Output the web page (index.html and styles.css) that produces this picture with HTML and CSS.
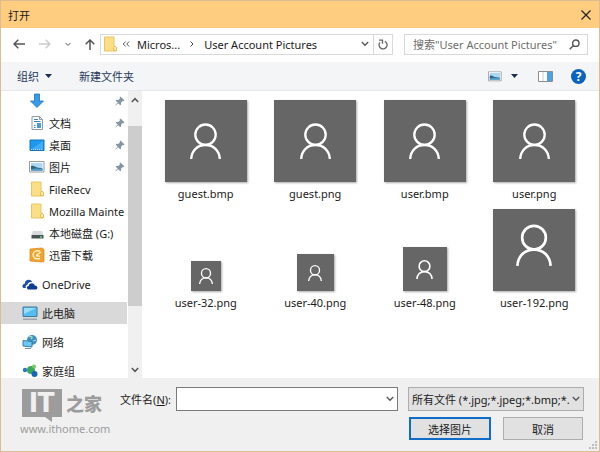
FILE: index.html
```html
<!DOCTYPE html>
<html lang="zh-CN">
<head>
    <meta charset="UTF-8">
    <title>打开</title>
    <link rel="stylesheet" href="styles.css">
</head>
<body>
<!-- 公用图标 -->
<svg class="sprite" aria-hidden="true">
    <symbol id="person" viewBox="0 0 31 36">
        <circle cx="15.5" cy="11.7" r="10.2"/>
        <path d="M1.2 36C1.6 27.500 7.500 22 15.500 22S29.400 27.500 29.800 36"/>
    </symbol>
    <symbol id="folder" viewBox="0 0 16 16">
        <path d="M2.500 1h9.500v9.500l2 .5v4h-11.500z" fill="#fbdf86" stroke="#e8c562"/>
        <path d="M11.500 14.500v-3l1.500-1.500 1.500 1.500v3z" fill="#fce9a8" stroke="#e3bd55"/>
    </symbol>
    <symbol id="pin" viewBox="0 0 10 10">
        <path d="M5.500.5l4 4-1 .8-.8-.3-1.700 1.700.1 1.800-.9.8-2-2L.6 9.600l-.4-.3 2.500-2.700-2-1.900.8-.9 1.900.1L5 2.200l-.4-.8z" fill="#8695a3"/>
    </symbol>
    <symbol id="chevron" viewBox="0 0 8 6">
        <path d="M.8 1l3.200 3.300L7.200 1" fill="none" stroke="#555" stroke-width="1.300"/>
    </symbol>
    <symbol id="picture" viewBox="0 0 16 12">
        <path d="M.5.5h14.500v10.500H.5z" fill="#fff" stroke="#9a9a9a"/>
        <path d="M2 2h11.500v7.500H2z" fill="#a9d8f5"/>
        <path d="M2 5c3-1 4 1 6 1.500s4 .5 5.500 1V9.500H2z" fill="#32647d"/>
        <path d="M2 8.500c4-1.500 7-1 11.500-.5v1.500H2z" fill="#4c9fd0"/>
    </symbol>
</svg>

<div class="dialog">
    <header class="titlebar">
        <span>打开</span>
        <button class="close" aria-label="关闭">
            <svg width="10" height="10" viewBox="0 0 10 10"><path d="M.5.5l9 9M9.500.5l-9 9" stroke="#222" stroke-width="1.200"/></svg>
        </button>
    </header>

    <nav class="navbar">
        <div class="history">
            <button class="plain" aria-label="后退"><svg width="12" height="10" viewBox="0 0 12 10"><path d="M12 5H1M5.300.7L1 5l4.300 4.300"/></svg></button>
            <button class="plain off" aria-label="前进"><svg width="12" height="10" viewBox="0 0 12 10"><path d="M0 5h11M6.700.7L11 5 6.700 9.300"/></svg></button>
            <button class="plain small" aria-label="最近"><svg width="6" height="5" viewBox="0 0 8 6"><use href="#chevron"/></svg></button>
            <button class="plain" aria-label="向上"><svg width="10" height="11" viewBox="0 0 10 11"><path d="M5 11V1M.7 5.300L5 1l4.300 4.300"/></svg></button>
        </div>
        <div class="address">
            <svg class="folder" width="16" height="16"><use href="#folder"/></svg>
            <svg width="8" height="6" viewBox="0 0 8 6"><path d="M3.700.5L1.200 3l2.500 2.500M7.200.5L4.700 3l2.500 2.500" fill="none" stroke="#555"/></svg>
            <a class="crumb" href="#">Micros...</a>
            <svg width="4" height="6" viewBox="0 0 4 6"><path d="M.5.5L3 3 .5 5.500" fill="none" stroke="#444"/></svg>
            <a class="crumb last" href="#">User Account Pictures</a>
            <button class="drop" aria-label="历史记录"><svg width="8" height="6"><use href="#chevron"/></svg></button>
            <button class="refresh" aria-label="刷新">
                <svg width="10" height="11" viewBox="0 0 10 11" fill="none" stroke="#666" stroke-width="1.300"><path d="M6.800 2.300A4 4 0 1 1 2 3.300M1 1.200h3.500v3.500"/></svg>
            </button>
        </div>
        <div class="search">
            <input type="text" aria-label="搜索" placeholder="搜索&quot;User Account Pictures&quot;">
            <svg width="11" height="11" viewBox="0 0 11 11" fill="none" stroke="#555" stroke-width="1.400"><circle cx="6.800" cy="4.200" r="3.200"/><path d="M4.500 6.500L.7 10.300"/></svg>
        </div>
    </nav>

    <div class="toolbar">
        <button class="tool">组织<svg width="7" height="4" viewBox="0 0 7 4"><path d="M0 0h7L3.500 4z" fill="#1b2f55"/></svg></button>
        <button class="tool">新建文件夹</button>
        <div class="views">
            <button class="plain" aria-label="视图"><svg width="14" height="11" viewBox="0 0 16 12"><use href="#picture"/></svg></button>
            <button class="plain" aria-label="更多视图"><svg width="7" height="4" viewBox="0 0 7 4"><path class="solid" d="M0 0h7L3.500 4z"/></svg></button>
            <button class="plain pane" aria-label="预览窗格">
                <svg width="15" height="11" viewBox="0 0 15 11"><path class="frame" d="M.5.5h14v10H.5z"/><path class="divider" d="M5 1v9"/><path class="preview" d="M9 1h5v9H9z"/></svg>
            </button>
            <button class="help" aria-label="帮助">?</button>
        </div>
    </div>

    <main class="content">
        <aside class="sidebar">
            <ul class="tree">
                <li class="sub">
                    <svg width="16" height="16" viewBox="0 0 16 16"><path d="M5.500 1h5v7h4L8 14.500 1.500 8h4z" fill="#359be8" stroke="#2173b8" stroke-width=".8"/></svg>
                    <span></span><svg class="pin" width="10" height="10"><use href="#pin"/></svg>
                </li>
                <li class="sub">
                    <svg width="16" height="16" viewBox="0 0 16 16"><path d="M3 1.500h7.500l3 3v10H3z" fill="#fff" stroke="#8b9ba8"/><path d="M5 4.500h4M5 6.500h6.500M5 10.500h1.500M5 12.500h1.500" stroke="#3387c5"/><path d="M8 8h4v5H8z" fill="#4b9cd3"/><path d="M10.500 1.500v3h3" fill="none" stroke="#8b9ba8"/></svg>
                    <span>文档</span><svg class="pin" width="10" height="10"><use href="#pin"/></svg>
                </li>
                <li class="sub">
                    <svg width="16" height="16" viewBox="0 0 16 16"><path d="M1 3h14v10.500H1z" fill="#1c98ef" stroke="#1373b9"/><path d="M2 12.500L14 4v8.500z" fill="#42adf6"/><path d="M2 12.500h12" stroke="#bce3ff" stroke-dasharray="1 1"/></svg>
                    <span>桌面</span><svg class="pin" width="10" height="10"><use href="#pin"/></svg>
                </li>
                <li class="sub">
                    <svg width="16" height="12"><use href="#picture"/></svg>
                    <span>图片</span><svg class="pin" width="10" height="10"><use href="#pin"/></svg>
                </li>
                <li class="sub"><svg width="16" height="16"><use href="#folder"/></svg><span>FileRecv</span></li>
                <li class="sub"><svg width="16" height="16"><use href="#folder"/></svg><span>Mozilla Mainte</span></li>
                <li class="sub">
                    <svg width="16" height="16" viewBox="0 0 16 16"><path d="M4 6h9l1.500 4h-12z" fill="#d8dbdc"/><path d="M2.500 10h12v3.500h-12z" fill="#4c5357"/><path d="M11 12h2" stroke="#59e36a" stroke-width="1.300"/></svg>
                    <span>本地磁盘 (G:)</span>
                </li>
                <li class="sub">
                    <svg width="16" height="16" viewBox="0 0 16 16"><path d="M1 2l12-1 2 1.500v12L13 15 1 14z" fill="#f2a32c" stroke="#d98413" stroke-width=".7"/><path d="M11 4C7 3 4 5 4 8s3 4.500 7 3.500M7 8.500l5-3.500M7 8.500l4 1" fill="none" stroke="#fff3cf" stroke-width="1.400"/></svg>
                    <span>迅雷下载</span>
                </li>
                <li class="root">
                    <svg width="16" height="16" viewBox="0 0 16 16"><path d="M1.500 12C-.5 11 .5 7.800 2.800 7.800 2.600 3.500 8.500 2 10.200 6 7 5.500 5.500 7.500 5.300 9 3.500 9 3.300 11 4 12z" fill="#1b4fa8"/><path d="M6.500 13.500c-2.300-.5-2-3.500.2-3.500.2-3.500 5.500-3.500 6-.5 3.500 0 3.300 4 .8 4z" fill="#0d3c92"/></svg>
                    <span>OneDrive</span>
                </li>
                <li class="root current">
                    <svg width="16" height="16" viewBox="0 0 16 16"><path d="M1 2h14v9.500H1z" fill="#55bdf0" stroke="#41799d"/><path d="M2 3h12L2 9z" fill="#97ddfa"/><path d="M1 14.200h14" stroke="#8b9aa3" stroke-width="1.200"/></svg>
                    <span>此电脑</span>
                </li>
                <li class="root">
                    <svg width="16" height="16" viewBox="0 0 16 16"><circle cx="10" cy="6" r="5" fill="#3b8fc4"/><path d="M7 3c3-2 4 1 2 2M11 7l3-1" stroke="#a8dfbc" stroke-width="1.300" fill="none"/><path d="M1 6.500l9 1v5.500l-9-1z" fill="#69c8f4" stroke="#3b7fa9"/><path d="M3 14.500h6" stroke="#77909d"/></svg>
                    <span>网络</span>
                </li>
                <li class="root">
                    <svg width="16" height="16" viewBox="0 0 16 16"><circle cx="3" cy="7" r="2.200" fill="#2b78c5"/><circle cx="9" cy="7" r="4" fill="#3ba75b"/><circle cx="12" cy="3.500" r="2" fill="#76ca62"/><circle cx="12.500" cy="11" r="3" fill="#1665b8"/></svg>
                    <span>家庭组</span>
                </li>
            </ul>
            <div class="scrollbar">
                <button class="plain" aria-label="向上滚动"><svg width="8" height="6" viewBox="0 0 8 6"><path d="M.8 5L4 1.700 7.200 5"/></svg></button>
                <div class="thumb"></div>
                <button class="plain" aria-label="向下滚动"><svg width="8" height="6" viewBox="0 0 8 6"><path d="M.8 1L4 4.300 7.200 1"/></svg></button>
            </div>
        </aside>

        <div class="files">
            <figure><div class="thumbnail"><svg><use href="#person"/></svg></div><figcaption>guest.bmp</figcaption></figure>
            <figure><div class="thumbnail"><svg><use href="#person"/></svg></div><figcaption>guest.png</figcaption></figure>
            <figure><div class="thumbnail"><svg><use href="#person"/></svg></div><figcaption>user.bmp</figcaption></figure>
            <figure><div class="thumbnail"><svg><use href="#person"/></svg></div><figcaption>user.png</figcaption></figure>
            <figure><div class="thumbnail s32"><svg><use href="#person"/></svg></div><figcaption>user-32.png</figcaption></figure>
            <figure><div class="thumbnail s40"><svg><use href="#person"/></svg></div><figcaption>user-40.png</figcaption></figure>
            <figure><div class="thumbnail s48"><svg><use href="#person"/></svg></div><figcaption>user-48.png</figcaption></figure>
            <figure><div class="thumbnail s192"><svg><use href="#person"/></svg></div><figcaption>user-192.png</figcaption></figure>
        </div>
    </main>

    <footer class="bottom">
        <div class="brand">
            <div class="logo"><span class="it">IT</span><span class="home">之家</span></div>
            <div class="site">www.ithome.com</div>
        </div>
        <div class="form">
            <div class="line">
                <label for="filename">文件名(<u>N</u>):</label>
                <div class="combo">
                    <input type="text" id="filename">
                    <svg width="8" height="6"><use href="#chevron"/></svg>
                </div>
                <div class="filter">
                    <select aria-label="文件类型"><option>所有文件 (*.jpg;*.jpeg;*.bmp;*.</option></select>
                    <svg width="8" height="6"><use href="#chevron"/></svg>
                </div>
            </div>
            <div class="actions">
                <button class="btn primary">选择图片</button>
                <button class="btn">取消</button>
            </div>
        </div>
        <svg class="grip" width="9" height="9" viewBox="0 0 9 9"><path d="M6 0h2v2H6zM3 3h2v2H3zM6 3h2v2H6zM0 6h2v2H0zM3 6h2v2H3zM6 6h2v2H6z" fill="#bdbdbd"/></svg>
    </footer>
</div>
</body>
</html>
```
FILE: styles.css
```css
*{box-sizing:border-box;}
body,ul,figure{margin:0;padding:0;}
body,button,input,select{
    font-family:"Noto Sans","Noto Sans CJK SC",sans-serif;
    font-size:11px;
    color:#1a1a1a;
}
button,input,select{margin:0;padding:0;border:0;background:none;}
svg{flex:none;}
.sprite{position:absolute;width:0;height:0;}
.dialog{
    display:flex;
    flex-direction:column;
    min-height:100vh;
    border:1px solid #dcbc90;
    background:#fff;
}
.titlebar{
    display:flex;
    align-items:center;
    justify-content:space-between;
    height:27px;
    padding:0 8px 0 7px;
    background:#ffcd80;
}
.close{display:flex;}
.plain{
    display:flex;
    align-items:center;
    justify-content:center;
}
.plain path{fill:none;stroke:#555;stroke-width:1.5;}
.plain .solid{fill:#1b2f55;stroke:none;}
.plain .frame{fill:#fff;stroke:#8c8c8c;stroke-width:1;}
.plain .divider{stroke:#ccc;stroke-width:1;}
.plain .preview{fill:#4ba3e3;stroke:none;}
.off path{stroke:#ccc;}

/* 地址栏 */
.navbar{
    display:flex;
    align-items:center;
    height:34px;
    padding:0 11px 2px 12px;
}
.history{
    display:flex;
    align-items:center;
    gap:14px;
    width:87px;
}
.history .small{width:6px;}
.address{
    display:flex;
    flex:1;
    align-items:center;
    height:21px;
    border:1px solid #d9d9d9;
}
.folder{margin:0 4px 0 1px;}
.crumb{
    margin:0 10px 0 7px;
    color:#1a1a1a;
    text-decoration:none;
    white-space:nowrap;
}
.last{
    flex:1;
    margin:0 0 0 10px;
}
.drop{
    display:flex;
    padding:0 4px;
}
.refresh{
    display:flex;
    align-items:center;
    justify-content:center;
    width:19px;
    height:100%;
    border-left:1px solid #d9d9d9;
}
.search{
    display:flex;
    align-items:center;
    width:184px;
    height:21px;
    margin-left:11px;
    padding:0 7px 0 8px;
    border:1px solid #d9d9d9;
}
.search input{
    flex:1;
    min-width:0;
    outline:0;
}
.search input::placeholder{color:#6d6d6d;}

/* 工具栏 */
.toolbar{
    display:flex;
    align-items:center;
    gap:27px;
    height:29px;
    padding:0 13px 0 16px;
    border-bottom:1px solid #e6e8ea;
    background:#f4f5f7;
}
.tool{
    display:flex;
    align-items:center;
    gap:6px;
    color:#1e395b;
}
.views{
    display:flex;
    flex:1;
    align-items:center;
    justify-content:flex-end;
    gap:9px;
}
.pane{margin:0 9px 0 11px;}
.help{
    width:15px;
    height:15px;
    border-radius:50%;
    background:#0b63c0;
    color:#fff;
    font-size:12px;
    font-weight:bold;
    line-height:15px;
}

/* 左侧导航和文件列表 */
.content{
    display:flex;
    flex:1;
}
.sidebar{
    display:flex;
    width:141px;
    height:287px;
}
.tree{
    flex:1;
    margin-top:-1px;
    list-style:none;
}
.tree li{
    display:flex;
    align-items:center;
    gap:4px;
    height:22px;
    white-space:nowrap;
}
.tree span{flex:1;}
.sub{padding-left:28px;}
.root{
    margin-top:7px;
    padding-left:21px;
}
.pin{margin-right:2px;}
.current{background:#d9d9d9;}
.scrollbar{
    display:flex;
    flex-direction:column;
    width:14px;
    margin-left:1px;
    background:#f0f0f0;
}
.scrollbar .plain{height:17px;}
.scrollbar .plain:first-child{height:35px;padding-bottom:18px;}
.scrollbar .plain:last-child{margin-top:auto;}
.thumb{
    height:180px;
    background:#cdcdcd;
}
.files{
    display:grid;
    flex:1;
    grid-template-columns:repeat(4,1fr);
    align-content:start;
    gap:3px 0;
    padding:9px 10px 0 9px;
}
.files figure{
    display:flex;
    flex-direction:column;
    align-items:center;
    justify-content:flex-end;
}
.files figcaption{
    line-height:24px;
    white-space:nowrap;
}
.thumbnail{
    display:flex;
    align-items:center;
    justify-content:center;
    width:82px;
    height:82px;
    background:#666;
    box-shadow:1px 1px 2px #aaa;
}
.thumbnail svg{
    width:31px;
    height:36px;
    fill:none;
    stroke:#fff;
    stroke-width:2.3;
}
.s32{width:30px;height:30px;}
.s40{width:37px;height:37px;}
.s48{width:44px;height:44px;}
.s32 svg,.s40 svg{width:14px;height:16px;stroke-width:3;}
.s48 svg{width:17px;height:19px;stroke-width:3;}
.s192{padding-bottom:10px;}
.s192 svg{width:36px;height:42px;}

/* 底部 */
.bottom{
    position:relative;
    display:flex;
    justify-content:space-between;
    height:73px;
    padding:9px 15px 0 19px;
    background:#f0f0f0;
}
.brand{color:#9c9c9c;}
.logo{
    display:flex;
    align-items:center;
    gap:4px;
    height:32px;
}
.it{
    position:relative;
    width:40px;
    height:28px;
    margin-left:2px;
    background:#9c9c9c;
    color:#f0f0f0;
    font-family:Roboto,sans-serif;
    font-size:28px;
    font-weight:900;
    line-height:28px;
    text-align:center;
}
/* 气泡的小尖角 */
.it::after{
    content:"";
    position:absolute;
    top:28px;
    right:10px;
    border-top:5px solid #9c9c9c;
    border-left:7px solid transparent;
}
.home{
    font-family:"Noto Sans CJK SC",sans-serif;
    font-size:18px;
    font-weight:900;
}
.site{line-height:20px;}
.line{
    display:flex;
    align-items:center;
    height:24px;
}
.combo,.filter{
    position:relative;
    height:24px;
}
.combo{
    width:222px;
    margin:0 10px 0 5px;
}
.combo input{
    width:100%;
    height:100%;
    padding:0 18px 0 4px;
    border:1px solid #7a7a7a;
    background:#fff;
}
.combo svg,.filter svg{
    position:absolute;
    top:9px;
    right:4px;
    pointer-events:none;
}
.filter{width:176px;}
.filter select{
    width:100%;
    height:100%;
    padding:0 12px 0 3px;
    border:1px solid #adadad;
    background:#e1e1e1;
    appearance:none;
}
.actions{
    display:flex;
    justify-content:flex-end;
    gap:12px;
    margin-top:6px;
    padding-right:1px;
}
.btn{
    width:80px;
    height:23px;
    border:1px solid #adadad;
    background:#e1e1e1;
}
.primary{
    width:82px;
    border:2px solid #0f6cc9;
}
.grip{
    position:absolute;
    right:1px;
    bottom:1px;
}
```
